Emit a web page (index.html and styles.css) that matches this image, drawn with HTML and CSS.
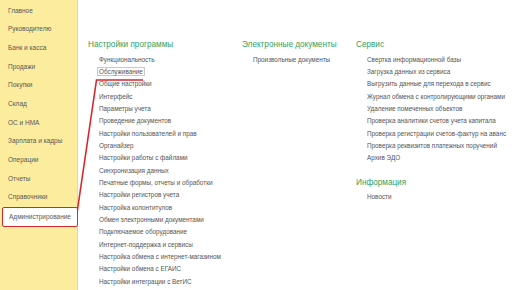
FILE: index.html
```html
<!DOCTYPE html>
<html lang="ru">
<head>
    <meta charset="UTF-8">
    <meta name="viewport" content="width=device-width, initial-scale=1.0">
    <title>Администрирование</title>
    <link rel="stylesheet" href="styles.css">
</head>
<body>
    <div class="app">
        <nav class="sidebar">
            <div class="nav-item">Главное</div>
            <div class="nav-item">Руководителю</div>
            <div class="nav-item">Банк и касса</div>
            <div class="nav-item">Продажи</div>
            <div class="nav-item">Покупки</div>
            <div class="nav-item">Склад</div>
            <div class="nav-item">ОС и НМА</div>
            <div class="nav-item">Зарплата и кадры</div>
            <div class="nav-item">Операции</div>
            <div class="nav-item">Отчеты</div>
            <div class="nav-item">Справочники</div>
            <div class="nav-item active">Администрирование</div>
        </nav>

        <main class="content">
            <section class="column col-settings">
                <h2>Настройки программы</h2>
                <ul>
                    <li>Функциональность</li>
                    <li><span class="focused">Обслуживание</span></li>
                    <li>Общие настройки</li>
                    <li>Интерфейс</li>
                    <li>Параметры учета</li>
                    <li>Проведение документов</li>
                    <li>Настройки пользователей и прав</li>
                    <li>Органайзер</li>
                    <li>Настройки работы с файлами</li>
                    <li>Синхронизация данных</li>
                    <li>Печатные формы, отчеты и обработки</li>
                    <li>Настройки регистров учета</li>
                    <li>Настройка колонтитулов</li>
                    <li>Обмен электронными документами</li>
                    <li>Подключаемое оборудование</li>
                    <li>Интернет-поддержка и сервисы</li>
                    <li>Настройка обмена с интернет-магазином</li>
                    <li>Настройки обмена с ЕГАИС</li>
                    <li>Настройки интеграции с ВетИС</li>
                </ul>
            </section>

            <section class="column col-edo">
                <h2>Электронные документы</h2>
                <ul>
                    <li>Произвольные документы</li>
                </ul>
            </section>

            <section class="column col-service">
                <h2>Сервис</h2>
                <ul>
                    <li>Свертка информационной базы</li>
                    <li>Загрузка данных из сервиса</li>
                    <li>Выгрузить данные для перехода в сервис</li>
                    <li>Журнал обмена с контролирующими органами</li>
                    <li>Удаление помеченных объектов</li>
                    <li>Проверка аналитики счетов учета капитала</li>
                    <li>Проверка регистрации счетов-фактур на аванс</li>
                    <li>Проверка реквизитов платежных поручений</li>
                    <li>Архив ЭДО</li>
                </ul>
                <h2 class="sub">Информация</h2>
                <ul>
                    <li>Новости</li>
                </ul>
            </section>
        </main>

        <!-- red pointer from the selected section to the highlighted command -->
        <svg class="pointer" width="516" height="290" viewBox="0 0 516 290">
            <path d="M77 213 L96.5 80 L143 80" fill="none" stroke="#d8262b" stroke-width="1.6"/>
        </svg>
    </div>
</body>
</html>
```

FILE: styles.css
```css
* {
    box-sizing: border-box;
}

body {
    margin: 0;
    font-family: "Liberation Sans", Arial, sans-serif;
    background: #ffffff;
    color: #555555;
}

.app {
    position: relative;
    display: flex;
    width: 516px;
    height: 290px;
    overflow: hidden;
}

.sidebar {
    width: 78px;
    flex-shrink: 0;
    background: #fcec9e;
    border-right: 1px solid #e9d98c;
    padding-top: 1.6px;
}

.nav-item {
    height: 18.7px;
    line-height: 18.7px;
    padding-left: 8px;
    font-size: 6.5px;
    color: #585858;
    white-space: nowrap;
}

.nav-item.active {
    background: #ffffff;
    margin: 0 0 0 2px;
    padding-left: 6px;
    width: 76px;
    height: 20px;
    line-height: 18px;
    border: 1.5px solid #d8262b;
    border-radius: 2px;
    position: relative;
    z-index: 1;
}

.content {
    flex: 1;
    display: grid;
    grid-template-columns: 154px 114px 1fr;
    padding: 39px 0 0 10px;
}

h2 {
    margin: 0 0 2.8px;
    font-size: 8.2px;
    line-height: 12px;
    font-weight: normal;
    color: #34a05e;
    white-space: nowrap;
}

h2.sub {
    margin-top: 11.8px;
}

ul {
    list-style: none;
    margin: 0;
    padding: 0 0 0 11px;
}

li {
    font-size: 6.35px;
    line-height: 12.33px;
    height: 12.33px;
    white-space: nowrap;
    color: #555555;
}

.focused {
    border: 1px solid #c8c8c8;
    padding: 0 1px;
    margin-left: -2px;
}

.pointer {
    position: absolute;
    left: 0;
    top: 0;
    pointer-events: none;
}
```
